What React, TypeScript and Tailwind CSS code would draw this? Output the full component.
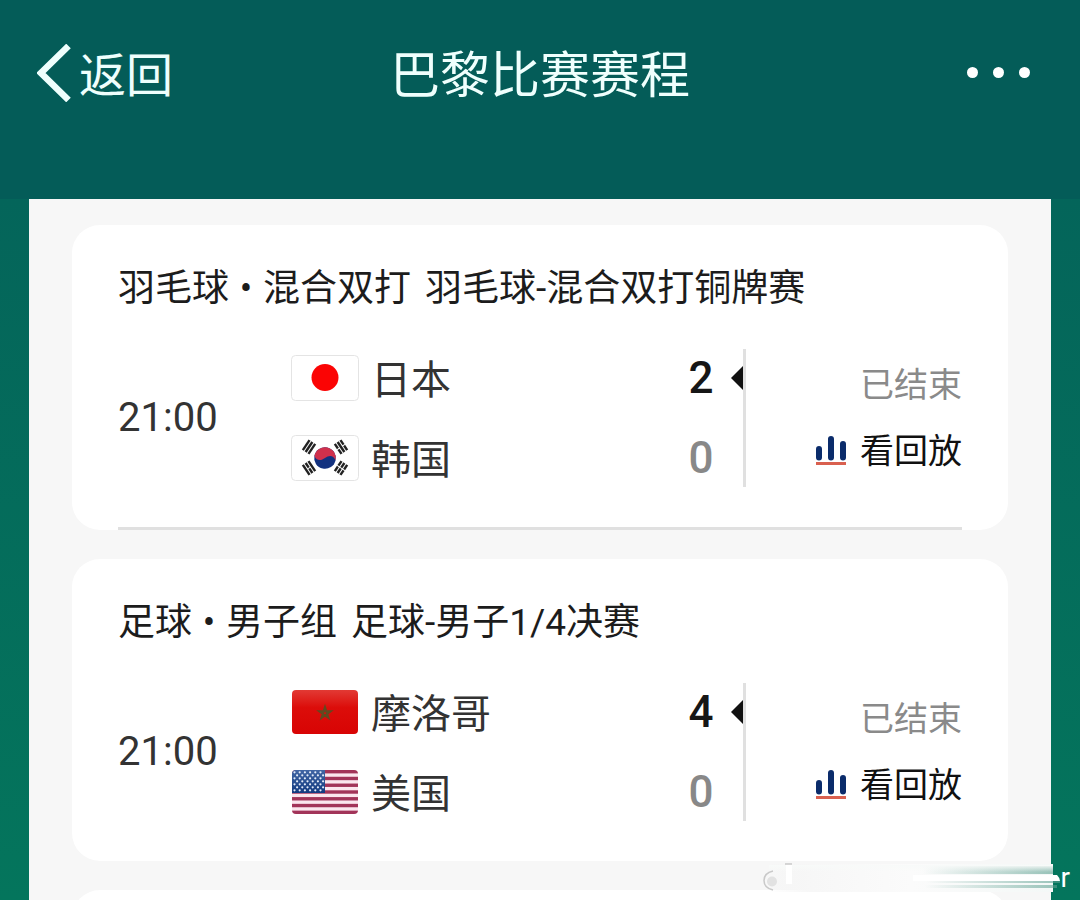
import type { ReactNode } from "react";

type Team = {
  name: string;
  score: number;
  winner?: boolean;
  flag: ReactNode;
};

type Match = {
  id: string;
  sport: string;
  group: string;
  event: string;
  time: string;
  status: string;
  teams: Team[];
  divider?: boolean;
};

function JapanFlag() {
  return (
    <svg viewBox="0 0 68 46" className="h-[46px] w-[68px] shrink-0">
      <rect x="0.5" y="0.5" width="67" height="45" rx="4" fill="#fff" stroke="#e4e4e4" />
      <circle cx="34" cy="22.5" r="13.5" fill="#fb0404" />
    </svg>
  );
}

// each trigram is three bars, "broken" marks the split ones
function Trigram({ x, y, angle, broken }: { x: number; y: number; angle: number; broken: boolean[] }) {
  return (
    <g transform={`translate(${x} ${y}) rotate(${angle})`} fill="#222">
      {broken.map((split, i) =>
        split ? (
          <g key={i}>
            <rect x="-6" y={i * 3.4 - 4.6} width="5.5" height="2.4" />
            <rect x="0.5" y={i * 3.4 - 4.6} width="5.5" height="2.4" />
          </g>
        ) : (
          <rect key={i} x="-6" y={i * 3.4 - 4.6} width="12" height="2.4" />
        )
      )}
    </g>
  );
}

function KoreaFlag() {
  return (
    <svg viewBox="0 0 68 46" className="h-[46px] w-[68px] shrink-0">
      <rect x="0.5" y="0.5" width="67" height="45" rx="4" fill="#fff" stroke="#e4e4e4" />
      <g transform="translate(34 23) rotate(12)">
        <circle r="10.8" fill="#12317f" />
        <path
          d="M-10.8 0a10.8 10.8 0 0 1 21.6 0c-3 -4.500 -7.500 -4 -10.8 0c-3.500 4 -8 4.500 -10.8 0z"
          fill="#d0304c"
        />
      </g>
      <Trigram x={18} y={12} angle={-56} broken={[false, false, false]} />
      <Trigram x={50} y={12} angle={56} broken={[true, false, true]} />
      <Trigram x={18} y={33} angle={56} broken={[false, true, false]} />
      <Trigram x={50} y={33} angle={-56} broken={[true, true, true]} />
    </svg>
  );
}

function MoroccoFlag() {
  return (
    <svg viewBox="0 0 68 46" className="h-[46px] w-[68px] shrink-0">
      <defs>
        <linearGradient id="morocco" x1="0" y1="0" x2="0" y2="1">
          <stop offset="0" stopColor="#e23a34" />
          <stop offset="0.4" stopColor="#dc0d0a" />
          <stop offset="1" stopColor="#d80404" />
        </linearGradient>
      </defs>
      <rect x="1" y="1" width="66" height="44" rx="4" fill="url(#morocco)" />
      <path
        d="M34 18L37.500 29L28.200 22.200H39.800L30.500 29Z"
        fill="none"
        stroke="#5f4a20"
        strokeWidth="2"
      />
    </svg>
  );
}

function UsaFlag() {
  return (
    <svg viewBox="0 0 68 46" className="h-[46px] w-[68px] shrink-0">
      <defs>
        <clipPath id="usa-clip">
          <rect x="1" y="1" width="66" height="44" rx="4" />
        </clipPath>
        <linearGradient id="usa-blue" x1="0" y1="0" x2="0" y2="1">
          <stop offset="0" stopColor="#4468a6" />
          <stop offset="1" stopColor="#123a80" />
        </linearGradient>
      </defs>
      <g clipPath="url(#usa-clip)">
        <rect width="68" height="46" fill="#fbe6ee" />
        {[0, 1, 2, 3, 4, 5, 6].map((i) => (
          <rect key={i} y={1 + i * 6.77} width="68" height="3.4" fill="#a23459" />
        ))}
        <rect width="34" height="24" fill="url(#usa-blue)" />
        {[0, 1, 2, 3, 4, 5, 6].map((row) =>
          [0, 1, 2, 3, 4, 5].map((col) => (
            <circle
              key={`${row}-${col}`}
              cx={3.5 + col * 5.2 + (row % 2) * 2.6}
              cy={3.3 + row * 3}
              r="1.1"
              fill="#e3ebf8"
            />
          ))
        )}
      </g>
    </svg>
  );
}

function ReplayIcon() {
  return (
    <svg viewBox="0 0 30 30" className="size-[30px]">
      <path d="M3 13v8.500M15 3v18.500M27 8v13.500" stroke="#0b2c6b" strokeWidth="6" strokeLinecap="round" />
      <path d="M0 27.500h30" stroke="#d9604f" strokeWidth="3" />
    </svg>
  );
}

const matches: Match[] = [
  {
    id: "badminton",
    sport: "羽毛球",
    group: "混合双打",
    event: "羽毛球-混合双打铜牌赛",
    time: "21:00",
    status: "已结束",
    divider: true,
    teams: [
      { name: "日本", score: 2, winner: true, flag: <JapanFlag /> },
      { name: "韩国", score: 0, flag: <KoreaFlag /> },
    ],
  },
  {
    id: "football",
    sport: "足球",
    group: "男子组",
    event: "足球-男子1/4决赛",
    time: "21:00",
    status: "已结束",
    teams: [
      { name: "摩洛哥", score: 4, winner: true, flag: <MoroccoFlag /> },
      { name: "美国", score: 0, flag: <UsaFlag /> },
    ],
  },
];

function TeamRow({ team }: { team: Team }) {
  return (
    <li className="flex h-[58px] items-center">
      {team.flag}
      <span className="ml-3 flex-1 pt-1.5 text-[40px] leading-[50px] text-[#333]">{team.name}</span>
      <span
        className={`w-7 text-center text-[44px] leading-[50px] font-medium ${
          team.winner ? "text-[#161616]" : "text-[#888]"
        }`}
      >
        {team.score}
      </span>
      <span className="ml-4 flex w-3 justify-end">
        {team.winner && (
          <svg viewBox="0 0 12 24" className="h-6 w-3">
            <path d="M12 0v24L0 12z" fill="#111" />
          </svg>
        )}
      </span>
    </li>
  );
}

function MatchCard({ match }: { match: Match }) {
  return (
    <article className="rounded-[28px] bg-white px-[46px] pt-[42px]">
      <h2 className="flex items-center text-[37px] leading-[44px] text-[#1c1c1c]">
        <span>{match.sport}</span>
        <span className="w-[34px] text-center">•</span>
        <span>{match.group}</span>
        <span className="ml-[14px]">{match.event}</span>
      </h2>
      <div className="mt-[38px] flex items-center pb-10">
        <time className="w-[173px] text-[40px] leading-[44px] text-[#333]">{match.time}</time>
        <ul className="flex flex-1 flex-col gap-[22px] border-r-[3px] border-[#e0e0e0]">
          {match.teams.map((team) => (
            <TeamRow key={team.name} team={team} />
          ))}
        </ul>
        <div className="flex w-[216px] flex-col items-end gap-[22px] text-[34px] leading-[44px]">
          <span className="text-[#8a8a8a]">{match.status}</span>
          <button type="button" className="flex items-center gap-[14px] text-[#111]">
            <ReplayIcon />
            看回放
          </button>
        </div>
      </div>
      {match.divider && <hr className="border-t-[3px] border-[#e0e0e0]" />}
    </article>
  );
}

// watermark with the user name smeared out, only the edges are left
function Watermark() {
  return (
    <div className="absolute right-[10px] bottom-2 flex h-7 items-center text-[28px] leading-7 text-white">
      <svg viewBox="0 0 298 30" className="h-[30px] w-[298px]">
        <defs>
          <linearGradient id="smear-base" x1="0" x2="1">
            <stop offset="0" stopColor="#f4f4f4" stopOpacity="0" />
            <stop offset="0.15" stopColor="#f7f7f7" />
            <stop offset="0.5" stopColor="#fbfbfb" />
            <stop offset="1" stopColor="#f4f8f7" />
          </linearGradient>
          <linearGradient id="smear-teal" x1="0" x2="1">
            <stop offset="0.55" stopColor="#5c9f90" stopOpacity="0" />
            <stop offset="1" stopColor="#5c9f90" stopOpacity="0.6" />
          </linearGradient>
          <linearGradient id="smear-top" x1="0" y1="0" x2="0" y2="1">
            <stop offset="0" stopColor="#f8faf9" />
            <stop offset="1" stopColor="#f8faf9" stopOpacity="0" />
          </linearGradient>
        </defs>
        <rect x="6" y="1" width="284" height="28" fill="url(#smear-base)" />
        <path d="M0 3h290v8H0z" fill="url(#smear-teal)" />
        <path d="M6 2h284v7H6z" fill="url(#smear-top)" />
        <path d="M150 12h144q3 3 3 6H150z" fill="#fff" />
        <path d="M0 18h297v2H0z" fill="url(#smear-teal)" />
        <path d="M0 22h294v3H0z" fill="url(#smear-teal)" />
        <path d="M10 8Q1 10 1 17.500T10 27" fill="none" stroke="#c9c9c9" strokeWidth="1.5" />
        <circle cx="9" cy="18.500" r="5" fill="#e2e2e2" />
        <path d="M23 1h6v20h-6z" fill="#fff" />
        <path d="M22 1h7" stroke="#c9c9c9" strokeWidth="1.5" />
      </svg>
      <span>r</span>
    </div>
  );
}

export default function App() {
  return (
    <div className="relative flex h-screen flex-col overflow-hidden bg-[#045c58] font-[Roboto,'Noto_Sans_CJK_SC',sans-serif]">
      <header className="grid h-[199px] shrink-0 grid-cols-[1fr_auto_1fr] items-center px-[37px] pb-[54px] text-[#effffd]">
        <button type="button" className="flex items-center gap-2 text-[47px] leading-[60px]">
          <svg viewBox="0 0 34 58" className="h-[58px] w-[34px]">
            <path d="M31.500 2L4 29l27.500 27" fill="none" stroke="currentColor" strokeWidth="6.500" />
          </svg>
          <span className="pt-1.5">返回</span>
        </button>
        <h1 className="pt-1.5 text-[50px] leading-[60px]">巴黎比赛赛程</h1>
        <button type="button" aria-label="更多" className="mr-[13px] flex gap-[15px] justify-self-end">
          <span className="size-[11px] rounded-full bg-white" />
          <span className="size-[11px] rounded-full bg-white" />
          <span className="size-[11px] rounded-full bg-white" />
        </button>
      </header>

      <main className="min-h-0 flex-1 bg-linear-to-b from-[#04655a] to-[#04755c] px-[29px]">
        <div className="flex h-full flex-col gap-[29px] overflow-hidden bg-[#f7f7f7] px-[43px] pt-[26px]">
          {matches.map((match) => (
            <MatchCard key={match.id} match={match} />
          ))}
          <div className="h-20 shrink-0 rounded-[28px] bg-white" />
        </div>
      </main>

      <Watermark />
    </div>
  );
}
